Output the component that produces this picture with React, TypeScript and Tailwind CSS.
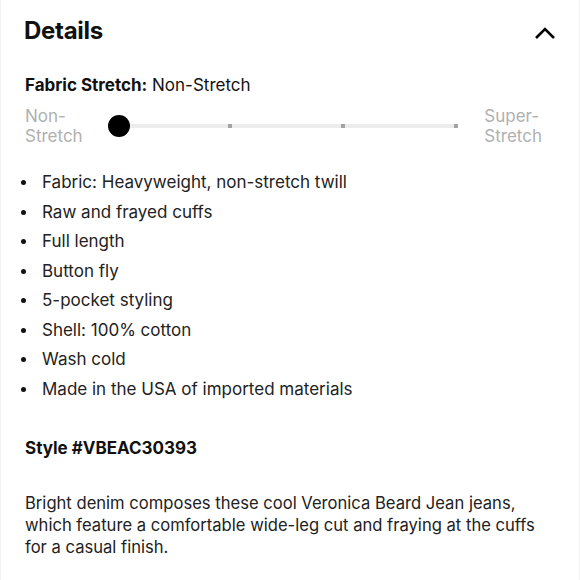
import React from "react";

const bullets = [
  "Fabric: Heavyweight, non-stretch twill",
  "Raw and frayed cuffs",
  "Full length",
  "Button fly",
  "5-pocket styling",
  "Shell: 100% cotton",
  "Wash cold",
  "Made in the USA of imported materials",
];

export default function App() {
  return (
    <div
      className="w-[580px] h-[580px] bg-white text-[#111] overflow-hidden border-x border-[#f2f2f2]"
      style={{ fontFamily: 'Inter, "Liberation Sans", Arial, sans-serif' }}
    >
      <div className="flex items-center justify-between pl-[23px] pr-[23px] pt-[16px] h-[46px]">
        <h2 className="text-[24px] font-bold leading-none tracking-[-0.3px]">Details</h2>
        <svg width="22" height="14" viewBox="0 0 22 14" className="mt-[4px]">
          <path d="M2 12 L11 3 L20 12" fill="none" stroke="#000" strokeWidth="2.6" />
        </svg>
      </div>

      <div className="pl-[24px] mt-[29px] text-[17px] leading-[20px]">
        <span className="font-bold">Fabric Stretch:</span> Non-Stretch
      </div>

      <div className="flex items-center pl-[24px] pr-[37px] mt-[11px]">
        <div className="w-[70px] text-[17px] leading-[20px] text-[#b0b0b0]">
          Non-
          <br />
          Stretch
        </div>
        <div className="relative flex items-center w-[350px] h-[40px] ml-[13px]">
          <div className="flex items-center justify-between flex-1 ml-[11px] h-[4px] bg-[#ececec]">
            <span />
            <span className="w-[4px] h-[4px] bg-[#a3a3a3]" />
            <span className="w-[4px] h-[4px] bg-[#a3a3a3]" />
            <span className="w-[4px] h-[4px] bg-[#a3a3a3]" />
          </div>
          <div className="absolute left-0 top-[9px] w-[22px] h-[22px] rounded-full bg-black" />
        </div>
        <div className="ml-auto text-[17px] leading-[20px] text-[#b0b0b0]">
          Super-
          <br />
          Stretch
        </div>
      </div>

      <ul className="mt-[22px] pl-[20px] flex flex-col text-[17px] leading-[29.5px] text-[#222]">
        {bullets.map((b) => (
          <li key={b} className="flex items-center">
            <span className="w-[5px] h-[5px] rounded-full bg-[#111] mr-[16px]" />
            {b}
          </li>
        ))}
      </ul>

      <div className="pl-[24px] mt-[34px] text-[17px] font-bold leading-[20px]">Style #VBEAC30393</div>

      <p className="pl-[24px] pr-[26px] mt-[34px] text-[16.6px] leading-[22px] text-[#222]">
        Bright denim composes these cool Veronica Beard Jean jeans, which feature a comfortable wide-leg cut and
        fraying at the cuffs for a casual finish.
      </p>
    </div>
  );
}
